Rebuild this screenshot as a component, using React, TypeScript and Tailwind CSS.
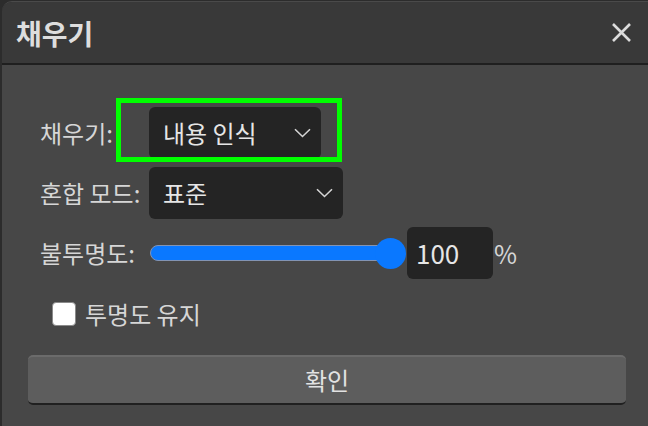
const font = { fontFamily: '"Noto Sans CJK KR", "Noto Sans", sans-serif' };

function Chevron() {
  return (
    <svg width="17" height="10" viewBox="0 0 17 10" fill="none">
      <path d="M1 1.2 L8.5 8.5 L16 1.2" stroke="#d4d4d4" strokeWidth="1.6" />
    </svg>
  );
}

function Select({ value, width }: { value: string; width: string }) {
  return (
    <div className={`flex h-[52px] items-center justify-between rounded-[6px] bg-[#242424] pl-[14px] pr-[10px] ${width}`}>
      <span className="text-[24px] leading-none text-[#e6e6e6]">{value}</span>
      <Chevron />
    </div>
  );
}

export default function App() {
  return (
    <div className="relative h-[426px] w-[648px] overflow-hidden bg-[#2c2c2c] pl-[2px] pt-[1px]" style={font}>
      <div className="flex h-full flex-col overflow-hidden rounded-tl-[10px] border-t border-[#4a4a4a]">
        <div className="flex h-[61px] items-center justify-between bg-[#393939] pl-[14px] pr-[16px]">
          <span className="text-[28px] font-bold leading-none text-[#dedede]">채우기</span>
          <svg width="21" height="21" viewBox="0 0 21 21">
            <path d="M2 2 L19 19 M19 2 L2 19" stroke="#dcdcdc" strokeWidth="2.6" />
          </svg>
        </div>
        <div className="h-[2px] bg-[#1f1f1f]" />
        <div className="flex flex-1 flex-col bg-[#474747] pl-[26px] pr-[22px] pt-[42px] text-[24px] leading-none text-[#d6d6d6]">
          <div className="flex flex-col gap-[8px] pl-[12px]">
            <div className="flex items-center">
              <span className="w-[109px]">채우기:</span>
              <Select value="내용 인식" width="w-[172px]" />
            </div>
            <div className="flex items-center">
              <span className="w-[109px]">혼합 모드:</span>
              <Select value="표준" width="w-[194px]" />
            </div>
            <div className="flex items-center">
              <span className="w-[109px]">불투명도:</span>
              <div className="relative ml-[1px] flex h-[52px] w-[256px] items-center">
                <div className="h-[16px] w-[245px] rounded-full border border-[#8394b3] bg-[#0a78ff]" />
                <div className="absolute right-0 top-[11px] h-[31px] w-[31px] rounded-full bg-[#0a78ff]" />
              </div>
              <div className="ml-[1px] flex h-[52px] w-[86px] items-center rounded-[6px] bg-[#242424] pl-[9px]">
                <span className="text-[26px] text-[#e6e6e6]">100</span>
              </div>
              <span className="ml-[1px] text-[25px]">%</span>
            </div>
          </div>
          <div className="mt-[23px] flex h-[24px] items-center pl-[24px]">
            <div className="h-[24px] w-[24px] rounded-[4px] border border-[#8a8a8a] bg-white" />
            <span className="ml-[9px]">투명도 유지</span>
          </div>
          <button className="mt-[29px] flex h-[50px] items-center justify-center rounded-[5px] border-t-2 border-b-2 border-t-[#6b6b6b] border-b-[#202020] bg-[#5d5d5d] text-[24px] leading-none text-[#e2e2e2]">
            확인
          </button>
        </div>
      </div>
      <div className="absolute left-[116px] top-[98px] h-[64px] w-[226px] border-[5px] border-[#00ff00]" />
    </div>
  );
}
